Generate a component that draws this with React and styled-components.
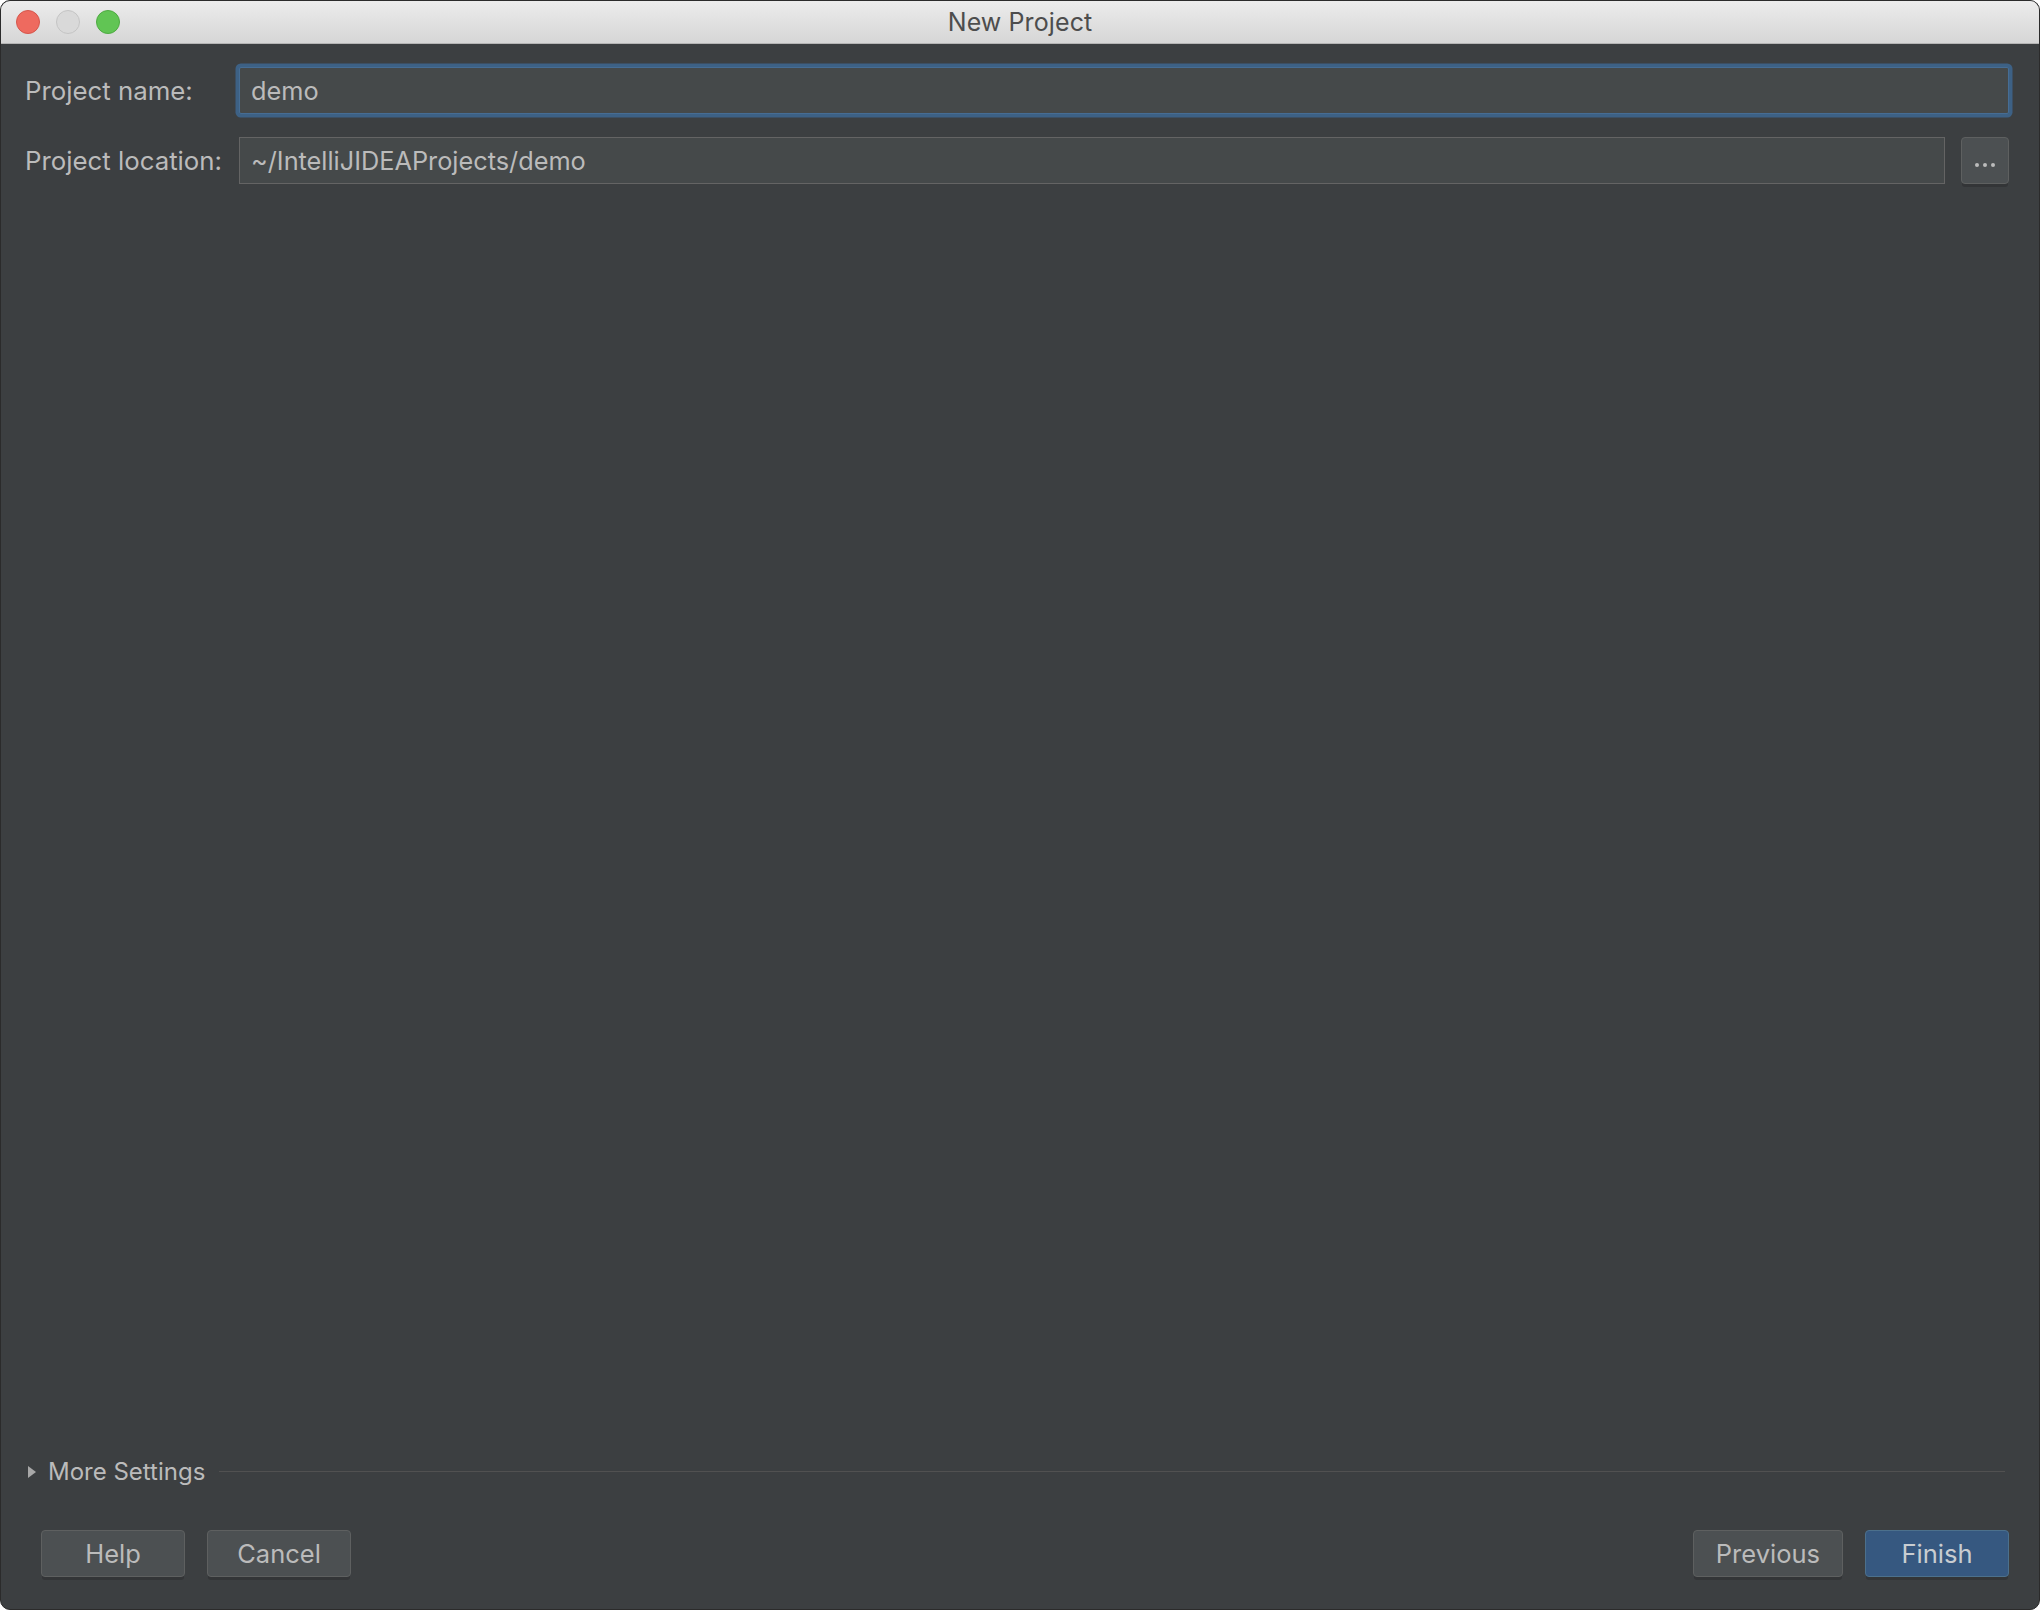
import React, { useState } from 'react';
import styled, { createGlobalStyle } from 'styled-components';

const GlobalStyle = createGlobalStyle`
  html, body {
    margin: 0;
    padding: 0;
    background: #ffffff;
  }
  body {
    font-family: Inter, "Liberation Sans", sans-serif;
  }
`;

const Window = styled.div`
  width: 2040px;
  height: 1610px;
  box-sizing: border-box;
  display: flex;
  flex-direction: column;
  border-radius: 10px;
  overflow: hidden;
  background: #3c3f41;
  border: 1px solid #2b2b2b;
`;

const TitleBar = styled.div`
  position: relative;
  height: 43px;
  flex: none;
  display: flex;
  align-items: center;
  justify-content: center;
  background: linear-gradient(#ececec, #d6d6d6);
  border-bottom: 1px solid #b5b5b5;
  box-sizing: border-box;
`;

const Lights = styled.div`
  position: absolute;
  left: 15px;
  top: 9px;
  display: flex;
  gap: 16px;
`;

const Light = styled.span`
  width: 24px;
  height: 24px;
  border-radius: 50%;
  box-sizing: border-box;
  background: ${p => p.$bg};
  border: 1px solid ${p => p.$edge};
`;

const Title = styled.div`
  font-size: 25px;
  color: #4d4d4d;
  letter-spacing: 0.1px;
`;

const Content = styled.div`
  flex: 1;
  display: flex;
  flex-direction: column;
  padding: 23px 30px 32px 24px;
`;

const Form = styled.div`
  display: grid;
  grid-template-columns: 198px 1fr;
  column-gap: 16px;
  row-gap: 23px;
  align-items: center;
`;

const Label = styled.label`
  font-size: 25.8px;
  color: #bbbbbb;
  white-space: nowrap;
`;

const Field = styled.div`
  display: flex;
  gap: 16px;
  align-items: center;
`;

const Input = styled.input`
  flex: 1;
  min-width: 0;
  height: 47px;
  box-sizing: border-box;
  padding: 0 11px;
  font-family: inherit;
  font-size: 25.3px;
  color: #bbbbbb;
  background: #45494a;
  border: 1px solid ${p => (p.$focused ? '#466d94' : '#646464')};
  border-radius: ${p => (p.$focused ? '2px' : '0')};
  box-shadow: ${p => (p.$focused ? '0 0 0 3.5px #3d6185' : 'none')};
  outline: none;
`;

const BrowseButton = styled.button`
  width: 48px;
  height: 47px;
  flex: none;
  display: flex;
  align-items: center;
  justify-content: center;
  gap: 4px;
  padding: 8px 0 0;
  background: #4c5052;
  border: 1px solid #5e6060;
  border-radius: 4px;
  box-shadow: 0 4px 0 -1px #333537;
  cursor: pointer;
`;

const Dot = styled.span`
  width: 4px;
  height: 4px;
  border-radius: 50%;
  background: #bbbbbb;
`;

const Spacer = styled.div`
  flex: 1;
`;

const MoreRow = styled.div`
  display: flex;
  align-items: center;
  gap: 12px;
  margin-left: 3px;
  margin-right: 4px;
  cursor: pointer;
`;

const Triangle = styled.span`
  width: 0;
  height: 0;
  border-top: 6px solid transparent;
  border-bottom: 6px solid transparent;
  border-left: 8px solid #a8a8a8;
`;

const MoreText = styled.span`
  font-size: 24px;
  color: #bbbbbb;
`;

const Separator = styled.div`
  flex: 1;
  height: 1px;
  margin-left: 2px;
  background: #515151;
`;

const ButtonBar = styled.div`
  display: flex;
  gap: 22px;
  margin-top: 44px;
  padding-left: 16px;
`;

const Button = styled.button`
  min-width: 144px;
  height: 47px;
  box-sizing: border-box;
  padding: 0 22px;
  font-family: inherit;
  font-size: 25.5px;
  color: ${p => (p.$primary ? '#c9cdd1' : '#bbbbbb')};
  background: ${p => (p.$primary ? '#365880' : '#4c5052')};
  border: 1px solid ${p => (p.$primary ? '#4c708c' : '#5e6060')};
  border-radius: 4px;
  box-shadow: 0 4px 0 -1px #333537;
  cursor: pointer;
`;

const App = () => {
  const [name, setName] = useState('demo');
  const [location, setLocation] = useState('~/IntelliJIDEAProjects/demo');

  return (
    <>
      <GlobalStyle />
      <Window>
        <TitleBar>
          <Lights>
            <Light $bg="#ee6a5f" $edge="#d5564c" />
            <Light $bg="#d9d9d9" $edge="#c4c4c4" />
            <Light $bg="#61c554" $edge="#4eaa42" />
          </Lights>
          <Title>New Project</Title>
        </TitleBar>
        <Content>
          <Form>
            <Label>Project name:</Label>
            <Field>
              <Input $focused value={name} onChange={e => setName(e.target.value)} />
            </Field>
            <Label>Project location:</Label>
            <Field>
              <Input value={location} onChange={e => setLocation(e.target.value)} />
              <BrowseButton>
                <Dot />
                <Dot />
                <Dot />
              </BrowseButton>
            </Field>
          </Form>
          <Spacer />
          <MoreRow>
            <Triangle />
            <MoreText>More Settings</MoreText>
            <Separator />
          </MoreRow>
          <ButtonBar>
            <Button>Help</Button>
            <Button>Cancel</Button>
            <Spacer />
            <Button>Previous</Button>
            <Button $primary>Finish</Button>
          </ButtonBar>
        </Content>
      </Window>
    </>
  );
};

export default App;
